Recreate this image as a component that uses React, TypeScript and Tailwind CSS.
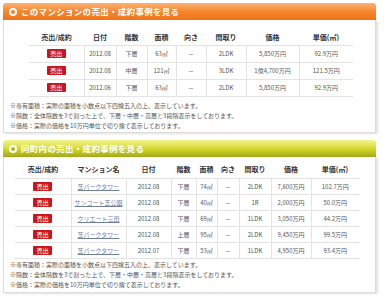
import React from "react";

type Row = {
  name?: string;
  date: string;
  floor: string;
  area: string;
  layout: string;
  price: string;
  unit: string;
};

const ownRows: Row[] = [
  { date: "2012.08", floor: "下層", area: "63㎡", layout: "2LDK", price: "5,850万円", unit: "92.9万円" },
  { date: "2012.08", floor: "中層", area: "121㎡", layout: "3LDK", price: "1億4,700万円", unit: "121.5万円" },
  { date: "2012.06", floor: "下層", area: "63㎡", layout: "2LDK", price: "5,850万円", unit: "92.9万円" },
];

const townRows: Row[] = [
  { name: "芝パークタワー", date: "2012.08", floor: "下層", area: "74㎡", layout: "2LDK", price: "7,600万円", unit: "102.7万円" },
  { name: "サンコート芝公園", date: "2012.08", floor: "下層", area: "40㎡", layout: "1R", price: "2,000万円", unit: "50.0万円" },
  { name: "クリエート三田", date: "2012.08", floor: "下層", area: "69㎡", layout: "1LDK", price: "3,050万円", unit: "44.2万円" },
  { name: "芝パークタワー", date: "2012.08", floor: "上層", area: "95㎡", layout: "2LDK", price: "9,450万円", unit: "99.5万円" },
  { name: "芝パークタワー", date: "2012.07", floor: "下層", area: "53㎡", layout: "1LDK", price: "4,950万円", unit: "93.4万円" },
];

const notes = [
  "※専有面積：実際の面積を小数点以下四捨五入の上、表示しています。",
  "※階数：全体階数を3で割った上で、下層・中層・高層と3段階表示をしております。",
  "※価格：実際の価格を10万円単位で切り捨て表示しております。",
];

const Badge = () => (
  <span className="inline-block w-[19px] h-[9px] leading-[9px] bg-[#c8161d] text-white text-[6px] text-center rounded-[1px]">
    売出
  </span>
);

const Header = ({ title, green }: { title: string; green?: boolean }) => (
  <div
    className={`h-[17px] flex items-center pl-[6px] rounded-t-[3px] ${
      green
        ? "bg-gradient-to-b from-[#f3f48a] via-[#d6da2c] to-[#a3aa1a]"
        : "bg-gradient-to-b from-[#fbb271] via-[#f6862a] to-[#ef7418]"
    }`}
  >
    <span className="w-[8px] h-[8px] rounded-full bg-white flex items-center justify-center">
      <span className={`w-[4px] h-[4px] rounded-full ${green ? "bg-[#b5bb1e]" : "bg-[#f28022]"}`} />
    </span>
    <span className="ml-[4px] text-white text-[8.5px] font-bold tracking-[0.3px]">{title}</span>
  </div>
);

const Notes = () => (
  <div className="text-[6px] leading-[10px] text-[#555] pl-[6px]">
    {notes.map((n) => (
      <p key={n}>{n}</p>
    ))}
  </div>
);

const th = "font-bold text-[7px] text-[#333] border-b border-[#e3e3e3]";
const td = "text-[6px] text-[#555] border-b border-l border-[#e3e3e3] first:border-l-0";

export default function App() {
  return (
    <div className="w-[384px] h-[308px] bg-white pt-[3px] pl-[3px] pr-[8px] font-['Noto_Sans_CJK_JP',sans-serif]">
      <Header title="このマンションの売出・成約事例を見る" />
      <div className="h-[113px] border border-t-0 border-[#dcdcdc] shadow-[2px_1px_2px_rgba(0,0,0,0.12)] pt-[9px]">
        <table className="table-fixed border-collapse ml-[25px] w-[324px] text-center">
          <colgroup>
            <col className="w-[55px]" />
            <col className="w-[32px]" />
            <col className="w-[31px]" />
            <col className="w-[29px]" />
            <col className="w-[30px]" />
            <col className="w-[40px]" />
            <col className="w-[53px]" />
            <col className="w-[54px]" />
          </colgroup>
          <thead>
            <tr className="h-[16px]">
              <th className={th}>売出/成約</th>
              <th className={th}>日付</th>
              <th className={th}>階数</th>
              <th className={th}>面積</th>
              <th className={th}>向き</th>
              <th className={th}>間取り</th>
              <th className={th}>価格</th>
              <th className={th}>単価(㎡)</th>
            </tr>
          </thead>
          <tbody>
            {ownRows.map((r, i) => (
              <tr key={i} className="h-[17px]">
                <td className={td}><Badge /></td>
                <td className={td}>{r.date}</td>
                <td className={td}>{r.floor}</td>
                <td className={td}>{r.area}</td>
                <td className={td}>－</td>
                <td className={td}>{r.layout}</td>
                <td className={td}>{r.price}</td>
                <td className={td}>{r.unit}</td>
              </tr>
            ))}
          </tbody>
        </table>
        <div className="mt-[4px]">
          <Notes />
        </div>
      </div>

      <div className="mt-[7px]">
        <Header title="同町内の売出・成約事例を見る" green />
        <div className="h-[136px] border border-t-0 border-[#dcdcdc] shadow-[2px_1px_2px_rgba(0,0,0,0.12)] pt-[4px]">
          <table className="table-fixed border-collapse ml-[11px] w-[344px] text-center">
            <colgroup>
              <col className="w-[56px]" />
              <col className="w-[55px]" />
              <col className="w-[45px]" />
              <col className="w-[25px]" />
              <col className="w-[21px]" />
              <col className="w-[22px]" />
              <col className="w-[32px]" />
              <col className="w-[40px]" />
              <col className="w-[48px]" />
            </colgroup>
            <thead>
              <tr className="h-[17px]">
                <th className={th}>売出/成約</th>
                <th className={th}>マンション名</th>
                <th className={th}>日付</th>
                <th className={th}>階数</th>
                <th className={th}>面積</th>
                <th className={th}>向き</th>
                <th className={th}>間取り</th>
                <th className={th}>価格</th>
                <th className={th}>単価(㎡)</th>
              </tr>
            </thead>
            <tbody>
              {townRows.map((r, i) => (
                <tr key={i} className="h-[16px]">
                  <td className={td}><Badge /></td>
                  <td className={td}>
                    <a href="#" className="text-[#6f7f9c] underline">{r.name}</a>
                  </td>
                  <td className={td}>{r.date}</td>
                  <td className={td}>{r.floor}</td>
                  <td className={td}>{r.area}</td>
                  <td className={td}>－</td>
                  <td className={td}>{r.layout}</td>
                  <td className={td}>{r.price}</td>
                  <td className={td}>{r.unit}</td>
                </tr>
              ))}
            </tbody>
          </table>
          <div className="mt-[1px]">
            <Notes />
          </div>
        </div>
      </div>
    </div>
  );
}
